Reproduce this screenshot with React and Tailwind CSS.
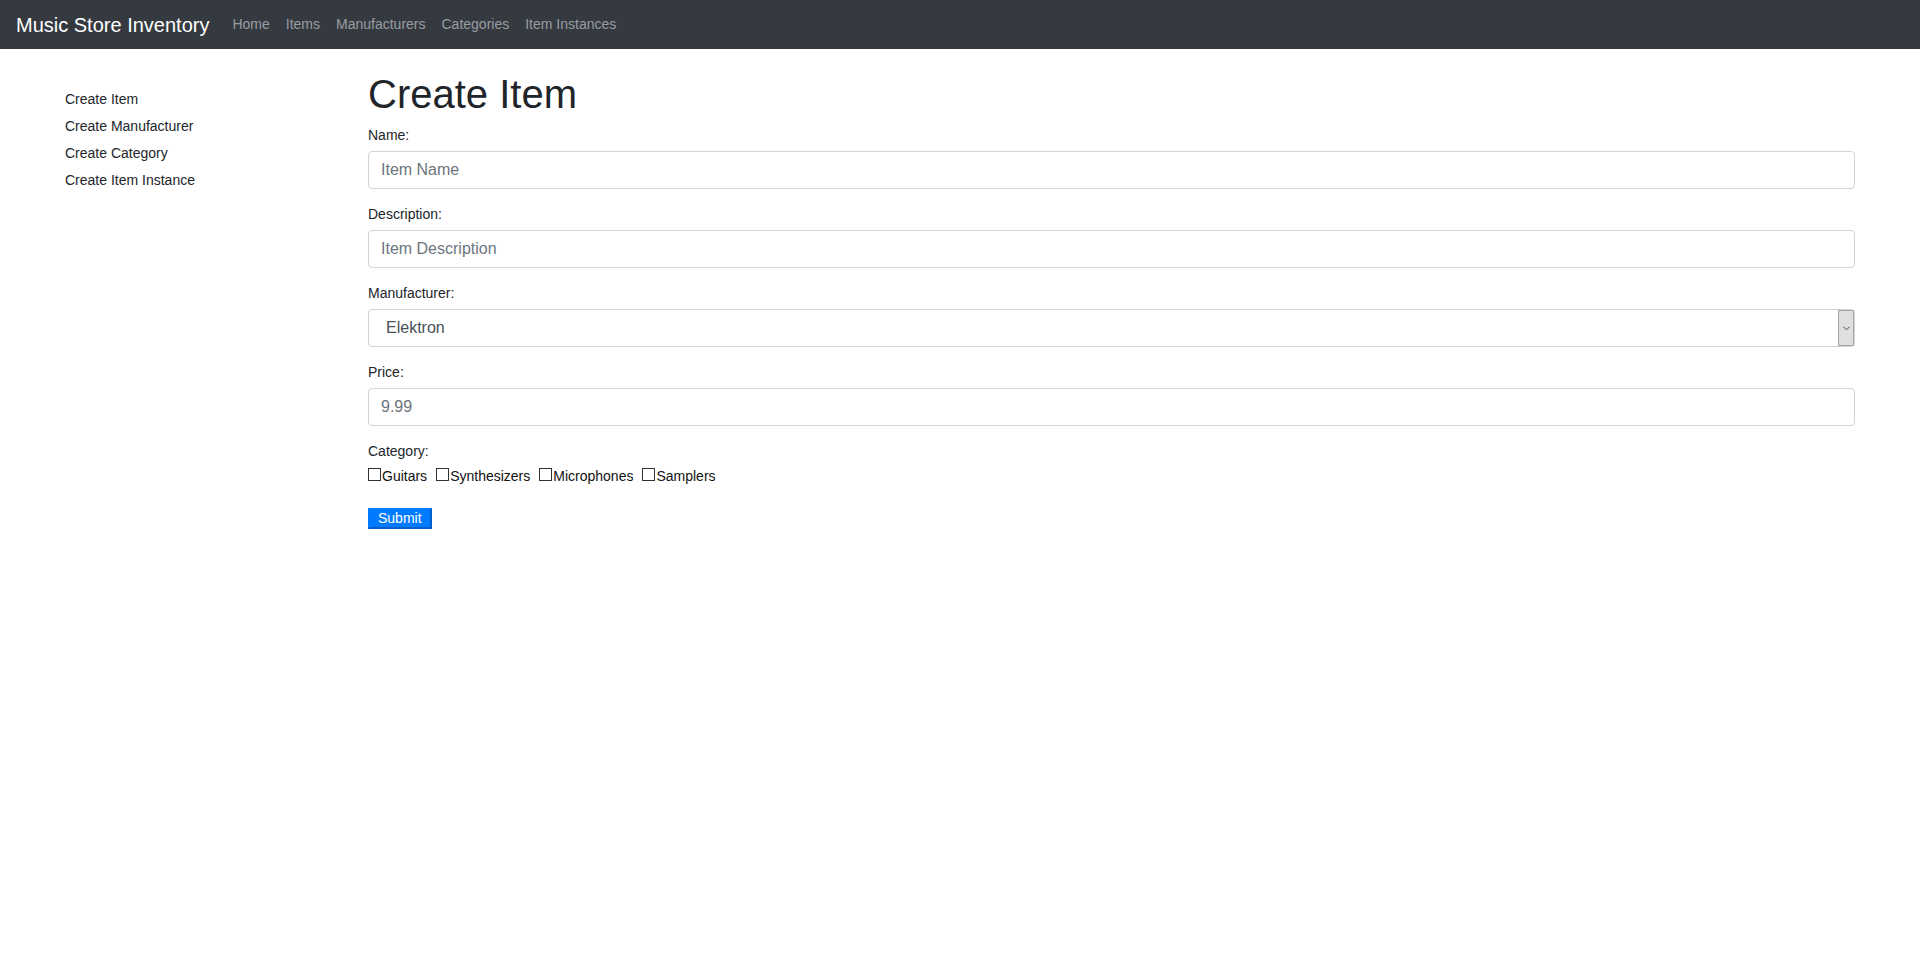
import React from 'react';

const navLinks = ['Home', 'Items', 'Manufacturers', 'Categories', 'Item Instances'];
const sideLinks = ['Create Item', 'Create Manufacturer', 'Create Category', 'Create Item Instance'];
const categories = ['Guitars', 'Synthesizers', 'Microphones', 'Samplers'];

function Field({ label, children }) {
  return (
    <div className="mb-[15px]">
      <label className="block text-[14px] leading-[21px] mb-[5px] text-[#212529]">{label}</label>
      {children}
    </div>
  );
}

function TextInput({ placeholder }) {
  return (
    <div className="h-[38px] w-full border border-[#ced4da] rounded-[4px] bg-white flex items-center px-[12px]">
      <span className="text-[16px] text-[#6c757d]">{placeholder}</span>
    </div>
  );
}

export default function App() {
  return (
    <div className="min-h-[966px] bg-white font-['Liberation_Sans',Arial,sans-serif] text-[#212529]">
      {/* Navbar */}
      <nav className="h-[49px] bg-[#343a40] flex items-center px-4">
        <span className="text-[20px] text-white mr-[15px]">Music Store Inventory</span>
        <div className="flex items-center">
          {navLinks.map((l) => (
            <span key={l} className="px-2 text-[14px] text-[#9a9da0]">{l}</span>
          ))}
        </div>
      </nav>

      <div className="flex pl-[65px] pr-[65px]">
        {/* Sidebar */}
        <ul className="w-[303px] shrink-0 mt-[37px] text-[14px] leading-[27px] text-[#212529]">
          {sideLinks.map((l) => (
            <li key={l}>{l}</li>
          ))}
        </ul>

        {/* Main */}
        <div className="flex-1 pt-[21px]">
          <h1 className="text-[40px] leading-[48px] mb-[7px] text-[#212529]">Create Item</h1>

          <Field label="Name:">
            <TextInput placeholder="Item Name" />
          </Field>

          <Field label="Description:">
            <TextInput placeholder="Item Description" />
          </Field>

          <Field label="Manufacturer:">
            <div className="h-[38px] w-full border border-[#ced4da] rounded-[4px] bg-white flex items-stretch">
              <span className="flex-1 flex items-center pl-[17px] text-[16px] text-[#495057]">Elektron</span>
              <span className="w-[16px] bg-[#dfdfdf] border border-[#a6a6a6] flex items-center justify-center">
                <svg width="7" height="5" viewBox="0 0 7 5">
                  <path d="M0.5 0.8 L3.5 3.8 L6.5 0.8" fill="none" stroke="#444" strokeWidth="1" />
                </svg>
              </span>
            </div>
          </Field>

          <Field label="Price:">
            <TextInput placeholder="9.99" />
          </Field>

          <div>
            <label className="block text-[14px] leading-[21px] mb-[4px] text-[#212529]">Category:</label>
            <div className="flex items-baseline gap-[9px] text-[14px] leading-[21px] text-[#111]">
              {categories.map((c) => (
                <span key={c} className="inline-flex items-baseline">
                  <span className="inline-block w-[13px] h-[13px] border border-[#333] bg-white"></span>
                  <span className="ml-[1px]">{c}</span>
                </span>
              ))}
            </div>
          </div>

          <button className="mt-[21px] h-[21px] px-[8px] text-[14px] leading-[17px] text-white bg-[#007bff] border-2 border-t-[#007bff] border-l-[#007bff] border-r-[#0060c8] border-b-[#0060c8]">
            Submit
          </button>
        </div>
      </div>
    </div>
  );
}
